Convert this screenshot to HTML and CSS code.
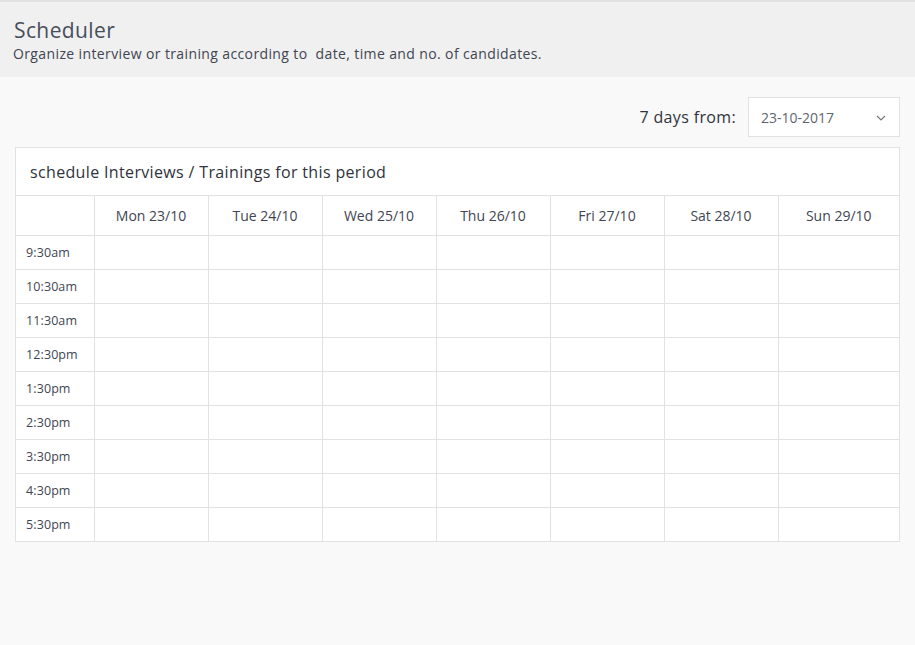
FILE: index.html
```html
<!DOCTYPE html>
<html>
<head>
<meta charset="utf-8">
<link rel="stylesheet" href="styles.css">
</head>
<body>
<header class="page-head">
  <h1 class="title">Scheduler</h1>
  <p class="subtitle">Organize interview or training according to&nbsp; date, time and no. of candidates.</p>
</header>
<main class="content">
  <div class="period">
    <span class="period-label">7 days from:</span>
    <div class="select">
      <span>23-10-2017</span>
      <svg class="chev" width="10" height="6" viewBox="0 0 10 6"><path d="M1 1l4 4 4-4" fill="none" stroke="#777" stroke-width="1.2"/></svg>
    </div>
  </div>
  <section class="panel">
    <div class="panel-head">schedule Interviews / Trainings for this period</div>
    <table class="grid">
      <colgroup>
        <col class="c-time"><col class="c-day"><col class="c-day"><col class="c-day"><col class="c-day"><col class="c-day"><col class="c-day"><col>
      </colgroup>
      <thead>
        <tr><th></th><th>Mon 23/10</th><th>Tue 24/10</th><th>Wed 25/10</th><th>Thu 26/10</th><th>Fri 27/10</th><th>Sat 28/10</th><th>Sun 29/10</th></tr>
      </thead>
      <tbody>
        <tr><td class="t">9:30am</td><td></td><td></td><td></td><td></td><td></td><td></td><td></td></tr>
        <tr><td class="t">10:30am</td><td></td><td></td><td></td><td></td><td></td><td></td><td></td></tr>
        <tr><td class="t">11:30am</td><td></td><td></td><td></td><td></td><td></td><td></td><td></td></tr>
        <tr><td class="t">12:30pm</td><td></td><td></td><td></td><td></td><td></td><td></td><td></td></tr>
        <tr><td class="t">1:30pm</td><td></td><td></td><td></td><td></td><td></td><td></td><td></td></tr>
        <tr><td class="t">2:30pm</td><td></td><td></td><td></td><td></td><td></td><td></td><td></td></tr>
        <tr><td class="t">3:30pm</td><td></td><td></td><td></td><td></td><td></td><td></td><td></td></tr>
        <tr><td class="t">4:30pm</td><td></td><td></td><td></td><td></td><td></td><td></td><td></td></tr>
        <tr><td class="t">5:30pm</td><td></td><td></td><td></td><td></td><td></td><td></td><td></td></tr>
      </tbody>
    </table>
  </section>
</main>
</body>
</html>
```
FILE: styles.css
```css
html, body {
  margin: 0;
  padding: 0;
}
body {
  background: #f9f9f9;
  font-family: "Open Sans", "Liberation Sans", sans-serif;
  color: #3f4551;
  width: 915px;
  height: 645px;
  overflow: hidden;
}
.page-head {
  background: #f0f0f0;
  border-top: 2px solid #e2e2e2;
  height: 77px;
  box-sizing: border-box;
  padding: 15px 13px 0;
}
.title {
  margin: 0 0 0 1px;
  font-size: 21px;
  font-weight: 400;
  line-height: 26px;
  letter-spacing: 0.4px;
  color: #474e5b;
}
.subtitle {
  margin: 1px 0 0;
  font-size: 14px;
  line-height: 20px;
  color: #3f4551;
  letter-spacing: 0.38px;
}
.content {
  padding: 20px 15px 0 15px;
}
.period {
  display: flex;
  justify-content: flex-end;
  align-items: center;
  gap: 12px;
}
.period-label {
  font-size: 16px;
  color: #2f333b;
  letter-spacing: 0.35px;
}
.select {
  width: 152px;
  height: 40px;
  box-sizing: border-box;
  background: #fff;
  border: 1px solid #e2e2e2;
  display: flex;
  align-items: center;
  justify-content: space-between;
  padding: 0 13px 0 12px;
  font-size: 14px;
  color: #5f6570;
}
.chev { margin-top: 1px; }
.panel {
  margin-top: 10px;
  background: #fff;
  border: 1px solid #e2e2e2;
}
.panel-head {
  height: 48px;
  box-sizing: border-box;
  padding: 0 14px;
  display: flex;
  align-items: center;
  font-size: 16px;
  color: #2f333b;
  letter-spacing: 0.35px;
  border-bottom: 1px solid #e2e2e2;
}
.grid {
  width: 100%;
  border-collapse: collapse;
  table-layout: fixed;
}
.c-time { width: 78px; }
.c-day { width: 114px; }
.grid th, .grid td {
  border: 1px solid #e2e2e2;
  padding: 0;
}
.grid tr > :first-child { border-left: none; }
.grid tr > :last-child { border-right: none; }
.grid tbody tr:last-child td { border-bottom: none; }
.grid thead th { border-top: none; }
.grid th {
  height: 39px;
  font-size: 14px;
  font-weight: 400;
  color: #3f4551;
  text-align: center;
}
.grid td {
  height: 33px;
}
.grid td.t {
  font-size: 12.5px;
  color: #3f4551;
  padding-left: 10px;
  letter-spacing: 0.1px;
}
```
